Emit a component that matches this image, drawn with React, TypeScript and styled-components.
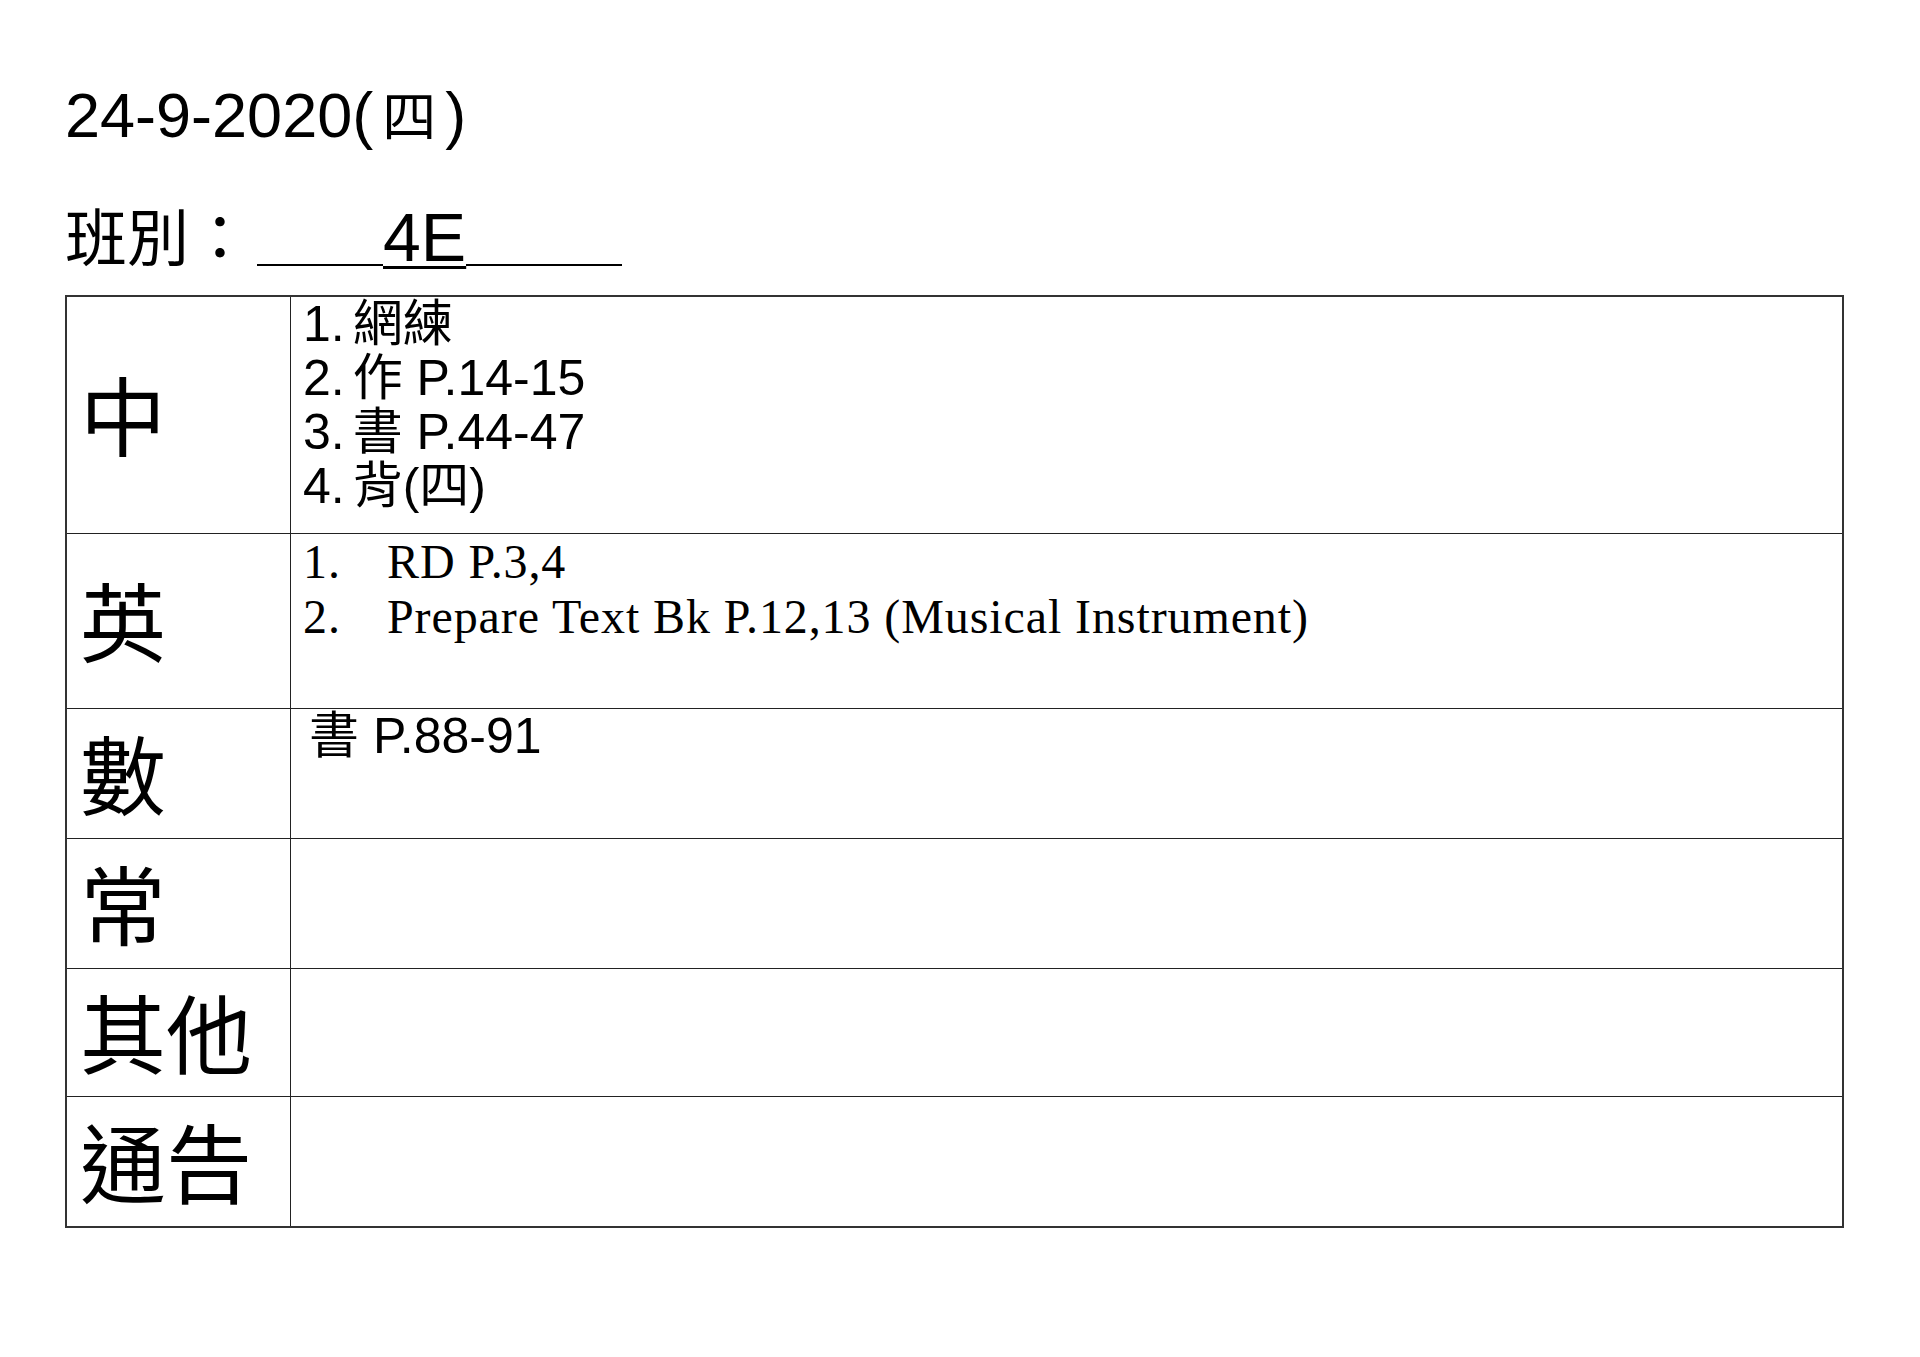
import React from "react";
import styled, { createGlobalStyle } from "styled-components";

const GlobalStyle = createGlobalStyle`
  html, body {
    margin: 0;
    padding: 0;
    background: #fff;
  }
  body {
    font-family: "Liberation Sans", "Noto Sans CJK TC", sans-serif;
    color: #000;
  }
`;

const Page = styled.div`
  width: 1920px;
  height: 1357px;
  box-sizing: border-box;
  padding: 78px 0 0 65px;
  background: #fff;
  overflow: hidden;
`;

const DateLine = styled.div`
  font-size: 63px;
  line-height: 72px;
  height: 72px;
  white-space: nowrap;
`;

const Han = styled.span<{ $size: number; $gap?: number }>`
  font-family: "Noto Sans CJK TC", sans-serif;
  font-size: ${(p) => p.$size}px;
  margin: 0 ${(p) => p.$gap ?? 0}px;
`;

const ClassLine = styled.div`
  margin-top: 44px;
  height: 80px;
  font-size: 68px;
  line-height: 80px;
  white-space: nowrap;
`;

const Blank = styled.span<{ $w: number; $lead?: number }>`
  display: inline-block;
  width: ${(p) => p.$w}px;
  margin-left: ${(p) => p.$lead ?? 0}px;
  height: 0;
  border-bottom: 2px solid #000;
  vertical-align: -5px;
`;

const Filled = styled.span`
  text-decoration: underline;
  text-decoration-thickness: 3px;
  text-underline-offset: 5px;
`;

const Sheet = styled.div`
  margin-top: 21px;
  width: 1775px;
  border: 2px solid #333;
  display: flex;
  flex-direction: column;
`;

const Row = styled.div<{ $h: number }>`
  display: grid;
  grid-template-columns: 224px 1fr;
  height: ${(p) => p.$h}px;
  box-sizing: border-box;
  border-bottom: 1px solid #222;

  &:last-child {
    border-bottom: none;
  }
`;

const Subject = styled.div`
  border-right: 1px solid #222;
  display: flex;
  align-items: center;
  padding: 0 0 4px 13px;
  font-family: "Noto Sans CJK TC", sans-serif;
  font-size: 86px;
  line-height: 1;
  white-space: nowrap;
`;

const Notes = styled.div<{ $pad?: number }>`
  padding-left: ${(p) => p.$pad ?? 12}px;
  font-size: 50px;
  line-height: 54px;
  white-space: nowrap;
`;

const Num = styled.span`
  margin-right: 8px;
`;

const EnglishList = styled.div`
  padding-left: 12px;
  display: grid;
  grid-template-columns: 84px auto;
  align-content: start;
  font-family: "Liberation Serif", "Times New Roman", serif;
  font-size: 48px;
  line-height: 55px;
  letter-spacing: 0.9px;
  white-space: nowrap;
`;

const rows = [
  { label: "中", h: 237 },
  { label: "英", h: 175 },
  { label: "數", h: 130 },
  { label: "常", h: 130 },
  { label: "其他", h: 128 },
  { label: "通告", h: 129 },
];

const Chinese = () => (
  <Notes>
    <div>
      <Num>1.</Num>網練
    </div>
    <div>
      <Num>2.</Num>作 P.14-15
    </div>
    <div>
      <Num>3.</Num>書 P.44-47
    </div>
    <div>
      <Num>4.</Num>背(四)
    </div>
  </Notes>
);

const English = () => (
  <EnglishList>
    <span>1.</span>
    <span>RD P.3,4</span>
    <span>2.</span>
    <span>Prepare Text Bk P.12,13 (Musical Instrument)</span>
  </EnglishList>
);

const Maths = () => (
  <Notes $pad={18}>
    <div>書 P.88-91</div>
  </Notes>
);

const content: Record<string, React.ReactNode> = {
  中: <Chinese />,
  英: <English />,
  數: <Maths />,
};

const App = () => {
  return (
    <Page>
      <GlobalStyle />
      <DateLine>
        24-9-2020(<Han $size={54} $gap={9}>四</Han>)
      </DateLine>
      <ClassLine>
        <Han $size={62}>班別：</Han>
        <Blank $w={126} $lead={6} />
        <Filled>4E</Filled>
        <Blank $w={156} />
      </ClassLine>
      <Sheet>
        {rows.map((r) => (
          <Row key={r.label} $h={r.h}>
            <Subject>{r.label}</Subject>
            {content[r.label] ?? <Notes />}
          </Row>
        ))}
      </Sheet>
    </Page>
  );
};

export default App;
